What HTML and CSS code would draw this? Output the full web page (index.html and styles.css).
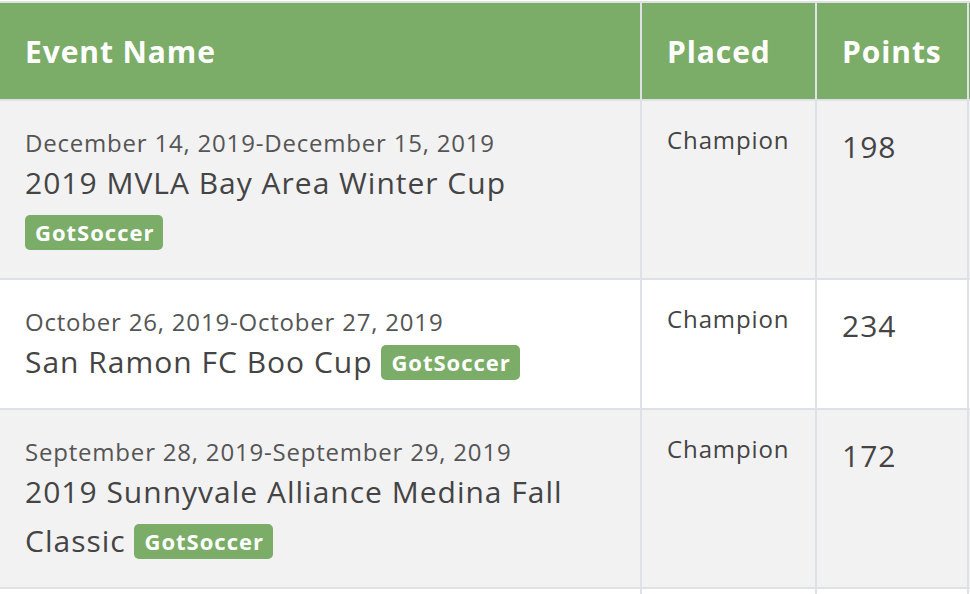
FILE: index.html
```html
<!DOCTYPE html>
<html>
<head>
<meta charset="utf-8">
<link rel="stylesheet" href="styles.css">
</head>
<body>
<div class="wrap">
<table class="results">
  <thead>
    <tr>
      <th class="col-event">Event Name</th>
      <th class="col-placed">Placed</th>
      <th class="col-points">Points</th>
      <th class="col-extra"></th>
    </tr>
  </thead>
  <tbody>
    <tr class="odd">
      <td class="event">
        <div class="date">December 14, 2019-December 15, 2019</div>
        <div class="name">2019 MVLA Bay Area Winter Cup</div>
        <div class="name"><span class="badge">GotSoccer</span></div>
      </td>
      <td class="placed">Champion</td>
      <td class="points">198</td>
      <td></td>
    </tr>
    <tr class="even">
      <td class="event">
        <div class="date">October 26, 2019-October 27, 2019</div>
        <div class="name">San Ramon FC Boo Cup <span class="badge">GotSoccer</span></div>
      </td>
      <td class="placed">Champion</td>
      <td class="points">234</td>
      <td></td>
    </tr>
    <tr class="odd">
      <td class="event">
        <div class="date">September 28, 2019-September 29, 2019</div>
        <div class="name">2019 Sunnyvale Alliance Medina Fall Classic <span class="badge">GotSoccer</span></div>
      </td>
      <td class="placed">Champion</td>
      <td class="points">172</td>
      <td></td>
    </tr>
    <tr class="even">
      <td class="event">&nbsp;</td>
      <td></td>
      <td></td>
      <td></td>
    </tr>
  </tbody>
</table>
</div>
</body>
</html>
```
FILE: styles.css
```css
html, body {
  margin: 0;
  padding: 0;
  background: #ffffff;
  overflow: hidden;
}
.wrap {
  padding-top: 1px;
  margin-left: -2px;
}
.results {
  border-collapse: collapse;
  font-family: "Open Sans", "Noto Sans", sans-serif;
  color: #444444;
  table-layout: fixed;
  width: 1100px;
}
.results th,
.results td {
  border: 2px solid #dee2e6;
  text-align: left;
  vertical-align: top;
}
.results th {
  background: #7bad68;
  color: #ffffff;
  font-weight: 700;
  font-size: 30px;
  letter-spacing: 0.9px;
  line-height: 40px;
  padding: 29px 25px 27px;
}
.col-event { width: 590px; }
.col-placed { width: 123px; }
.col-points { width: 100px; }
.col-extra { width: 200px; }
.results td {
  padding: 20px 25px 22px;
}
.odd td { background: #f2f2f2; }
.even td { background: #ffffff; }
.date {
  margin-top: 7px;
  font-size: 24px;
  letter-spacing: 0.8px;
  line-height: 30px;
  color: #555555;
}
.name {
  font-size: 30px;
  letter-spacing: 1px;
  line-height: 49px;
  color: #444444;
}
.badge {
  display: inline-block;
  background: #7bad68;
  color: #ffffff;
  font-weight: 700;
  font-size: 22px;
  letter-spacing: 1px;
  line-height: 35px;
  padding: 0 9px 0 10px;
  border-radius: 5px;
  vertical-align: 2px;
}
.placed {
  font-size: 24px;
  letter-spacing: 0.9px;
  line-height: 38px;
}
.points {
  font-size: 30px;
  letter-spacing: 1px;
  line-height: 52px;
}
```
